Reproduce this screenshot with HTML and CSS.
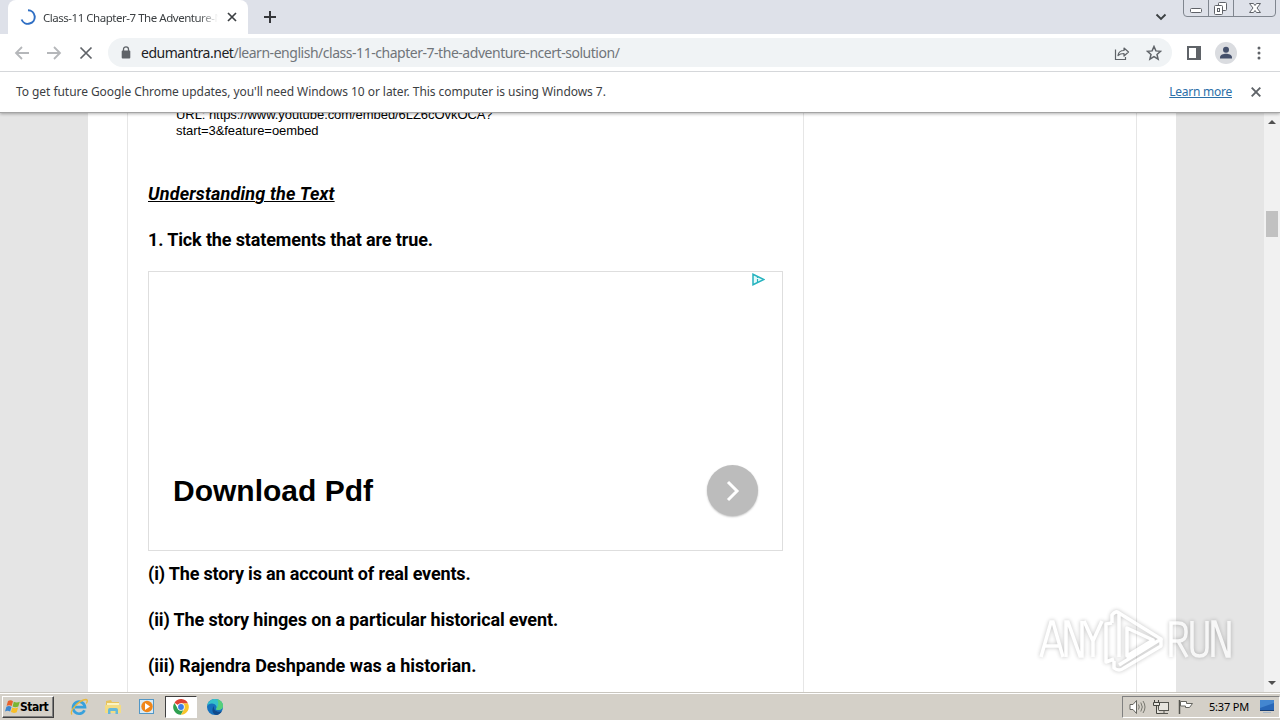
FILE: index.html
```html
<!DOCTYPE html>
<html lang="en">
<head>
    <meta charset="UTF-8">
    <meta name="viewport" content="width=device-width, initial-scale=1.0">
    <title>Class-11 Chapter-7 The Adventure</title>
    <link rel="stylesheet" href="styles.css">
</head>
<body>
    <header class="browser">
        <div class="tab-strip">
            <div class="tab">
                <svg class="spinner" width="16" height="16" viewBox="0 0 16 16"><path d="M8 1.2A6.8 6.8 0 1 1 1.6 10.5" fill="none" stroke="#2f6fc4" stroke-width="2"/></svg>
                <span class="tab-title">Class-11 Chapter-7 The Adventure-N</span>
                <svg class="tab-close" width="10" height="10" viewBox="0 0 10 10"><path d="M1 1l8 8M9 1l-8 8" stroke="#3c4043" stroke-width="1.7"/></svg>
            </div>
            <svg class="new-tab" width="12" height="12" viewBox="0 0 12 12"><path d="M6 0v12M0 6h12" stroke="#35363a" stroke-width="2"/></svg>
            <svg class="tab-search" width="12" height="8" viewBox="0 0 12 8"><path d="M1.5 1.5L6 6l4.500-4.500" fill="none" stroke="#3c4043" stroke-width="1.900"/></svg>
            <svg class="window-buttons" width="93" height="17" viewBox="0 0 93 17">
                <path d="M.5 0v13q0 3.500 3.500 3.500h85q3.500 0 3.500-3.500V0M25.500 0v16M50.500 0v16" fill="none" stroke="#80868f"/>
                <rect x="7.500" y="8.500" width="11" height="4" rx="1" fill="#fff" stroke="#5f6268"/>
                <rect x="35.500" y="2.500" width="8" height="8" rx="1" fill="#fff" stroke="#5f6268"/>
                <rect x="31.500" y="5.500" width="8" height="9" rx="1" fill="#fff" stroke="#5f6268"/>
                <rect x="34.500" y="8.500" width="2" height="3" fill="none" stroke="#5f6268"/>
                <path d="M66.500 3.500h4l1.500 2 1.500-2h4L74 8l3.500 4.500h-4l-1.500-2-1.500 2h-4L70 8z" fill="#fff" stroke="#5f6268"/>
            </svg>
        </div>
        <div class="toolbar">
            <svg class="nav" width="16" height="14" viewBox="0 0 16 14"><path d="M15 7H2M8 1L2 7l6 6" fill="none" stroke="#b5b7ba" stroke-width="1.800"/></svg>
            <svg class="nav" width="16" height="14" viewBox="0 0 16 14"><path d="M1 7h13M8 1l6 6-6 6" fill="none" stroke="#b5b7ba" stroke-width="1.800"/></svg>
            <svg class="nav" width="16" height="14" viewBox="0 0 16 14"><path d="M2.500 1.500l11 11M13.500 1.500l-11 11" stroke="#5f6368" stroke-width="1.700"/></svg>
            <div class="omnibox">
                <svg width="10" height="13" viewBox="0 0 10 13"><rect x=".7" y="4.500" width="8.600" height="8" rx="1" fill="#5f6368"/><path d="M2.500 5V3.300a2.500 2.500 0 0 1 5 0V5" fill="none" stroke="#5f6368" stroke-width="1.300"/></svg>
                <span class="url"><b>edumantra.net</b>/learn-english/class-11-chapter-7-the-adventure-ncert-solution/</span>
                <svg class="share" width="16" height="14" viewBox="0 0 16 14"><path d="M1.500 3.500v10h10v-2.500" fill="none" stroke="#5f6368" stroke-width="1.200"/><path d="M4 9.500c.5-3.500 2.500-5 6-5V2l4.500 4-4.500 4V7.500c-2.800 0-4.500.5-6 2z" fill="none" stroke="#5f6368" stroke-width="1.200" stroke-linejoin="round"/></svg>
                <svg width="16" height="16" viewBox="0 0 16 16"><path d="M8 1.500l1.900 4.400 4.700.4-3.600 3.100 1.100 4.700L8 11.600l-4.100 2.500L5 9.400 1.400 6.300l4.700-.4z" fill="none" stroke="#5f6368" stroke-width="1.500"/></svg>
            </div>
            <svg class="side-panel" width="14" height="14" viewBox="0 0 14 14"><path d="M0 0h14v14H0zM2 2v10h7V2z" fill="#5f6368" fill-rule="evenodd"/></svg>
            <svg class="profile" width="22" height="22" viewBox="0 0 22 22"><circle cx="11" cy="11" r="11" fill="#dadce0"/><circle cx="11" cy="7.700" r="3" fill="#44506b"/><path d="M5 16.500v-1.200c0-2.600 3.500-3.600 6-3.600s6 1 6 3.600v1.200z" fill="#44506b"/></svg>
            <svg class="menu" width="4" height="14" viewBox="0 0 4 14" fill="#5f6368"><circle cx="2" cy="2" r="1.500"/><circle cx="2" cy="7" r="1.500"/><circle cx="2" cy="12" r="1.500"/></svg>
        </div>
        <div class="infobar">
            <span class="infobar-text">To get future Google Chrome updates, you'll need Windows 10 or later. This computer is using Windows 7.</span>
            <a class="learn-more">Learn more</a>
            <svg width="10" height="10" viewBox="0 0 10 10"><path d="M.7.7l8.600 8.600M9.300.7L.7 9.300" stroke="#5f6368" stroke-width="1.900"/></svg>
        </div>
    </header>

    <div class="viewport">
        <main class="page">
            <article class="content">
                <p class="embed">URL: https://www.youtube.com/embed/6LZ6cOvkOCA?<br>start=3&amp;feature=oembed</p>
                <h2>Understanding the Text</h2>
                <p class="q q-title">1. Tick the statements that are true.</p>
                <div class="ad">
                    <svg class="ad-choices" width="13" height="13" viewBox="0 0 13 13"><path d="M1 1.200v10.600L12 6.500z" fill="#e4fafa" stroke="#26b3bf" stroke-width="1.500"/><path d="M5.500 4v1M5.500 6v3.500" stroke="#26b3bf" stroke-width="1.200"/></svg>
                    <div class="ad-row">
                        <span class="ad-text">Download Pdf</span>
                        <span class="ad-button"><svg width="14" height="22" viewBox="0 0 14 22"><path d="M2 2l9 9-9 9" fill="none" stroke="#fff" stroke-width="3"/></svg></span>
                    </div>
                </div>
                <p class="q q1">(i) The story is an account of real events.</p>
                <p class="q q2">(ii) The story hinges on a particular historical event.</p>
                <p class="q q3">(iii) Rajendra Deshpande was a historian.</p>
            </article>
            <aside class="sidebar"></aside>
        </main>
        <div class="scrollbar">
            <svg width="8" height="4" viewBox="0 0 8 4"><path d="M0 4l4-4 4 4z" fill="#505050"/></svg>
            <div class="thumb"></div>
            <svg width="8" height="4" viewBox="0 0 8 4"><path d="M0 0l4 4 4-4z" fill="#505050"/></svg>
        </div>
    </div>

    <footer class="taskbar">
        <div class="start">
            <svg width="16" height="15" viewBox="0 0 16 15"><path d="M3 2c2-1 3.500-.8 5 .2L6.700 7C5 6 3.500 6 1.600 6.800z" fill="#e8622c"/><path d="M8.800 2.700c2 1 3.800 1 6 0l-1.500 4.800c-2 .9-4 .9-5.700-.1z" fill="#79b534"/><path d="M1.400 7.700c2-.8 3.400-.8 5.100.2L5.100 12.600c-1.600-1-3.200-1-5.100-.2z" fill="#3d87cf"/><path d="M7.300 8.400c1.900 1 3.700 1 5.800.1l-1.400 4.800c-2 .8-4 .8-5.800-.2z" fill="#f8bf28"/></svg>
            <span>Start</span>
        </div>
        <div class="launch">
            <!-- Internet Explorer -->
            <svg width="18" height="18" viewBox="0 0 18 18"><path d="M14.500 12.200A6 6 0 1 1 15 9.200H5" fill="none" stroke="#38a1dc" stroke-width="2.700"/><path d="M2 16.500C-1 13 9 2 16 1.500c2 .2 1.300 2.500.3 4" fill="none" stroke="#e9b83a" stroke-width="1.300"/></svg>
        </div>
        <div class="launch">
            <!-- Explorer -->
            <svg width="18" height="18" viewBox="0 0 18 18"><path d="M2 3l5-1 1 2h7v10H2z" fill="#e7c35c"/><path d="M3 5h12v4H3z" fill="#fbf3c1"/><path d="M1 7h16v8H1z" fill="#f3dc83"/><path d="M4 16v-4q0-2 2-2h6q2 0 2 2v4h-2.500v-3h-5v3z" fill="#65b8d9"/></svg>
        </div>
        <div class="launch">
            <!-- Media Player -->
            <svg width="18" height="18" viewBox="0 0 18 18"><rect x="1.500" y="1.500" width="14" height="14" fill="#d9ebf6" stroke="#5297c6"/><circle cx="9" cy="8.500" r="5.700" fill="#f08619"/><path d="M7 5v7l5-3.500z" fill="#fff"/></svg>
        </div>
        <div class="launch active">
            <!-- Chrome -->
            <svg width="16" height="16" viewBox="0 0 16 16"><path d="M8 8L1.500 3.700A7.700 7.700 0 0 1 15 4.500H8z" fill="#df4334"/><path d="M8 8l3.300 1.500L8 15.700A7.700 7.700 0 0 1 1.400 3.900L4.800 9.500z" fill="#2fa050"/><path d="M8 4.500h7A7.700 7.700 0 0 1 8 15.700l3.300-6z" fill="#f8c52c"/><circle cx="8" cy="8" r="3.700" fill="#fff"/><circle cx="8" cy="8" r="2.900" fill="#3e7ee8"/></svg>
        </div>
        <div class="launch">
            <!-- Edge -->
            <svg width="18" height="18" viewBox="0 0 18 18"><circle cx="9" cy="9" r="8" fill="#1671bd"/><path d="M1.200 8C2 3 5.500 1 9 1c5 0 8 3.500 8 6.800 0 3-2.500 4.200-5 4.200-1.600 0-2.300-.7-1.700-1.500C11.500 8.500 9 5.300 5.800 5.500 3.500 5.600 2 6.700 1.200 8z" fill="#35c1cb"/><path d="M11 1.300c4 .8 6 3.800 6 6.500 0 3-2.500 4.200-5 4.200-1.600 0-2.300-.7-1.700-1.500C12.500 8 13 4 11 1.300z" fill="#57cf7b"/><path d="M8 8c-1 4 2.500 6.500 7 5.600l1-.6c-1 2-2.800 3.500-5 4C6.500 17 5 11 8 8z" fill="#114a8b"/></svg>
        </div>
        <div class="tray">
            <svg width="17" height="16" viewBox="0 0 17 16"><path d="M1 5.500h3l3.500-4v13L4 10.500H1z" fill="#fff" stroke="#65655f"/><path d="M9.500 5.500q1.500 2.500 0 5M11.800 3.500q3 4.500 0 9M14 2q4 6 0 12" fill="none" stroke="#77776f"/></svg>
            <svg width="17" height="16" viewBox="0 0 17 16"><rect x="5.500" y="3.500" width="10" height="8" fill="#e7e5df" stroke="#55554f"/><path d="M7 14.500h8M11 12v2" stroke="#55554f"/><path d="M1.500 1v3M5.500 1v3M.5 3.500h6v3h-6zM3.500 7v7.500H7" fill="#e7e5df" stroke="#44443f"/></svg>
            <svg width="17" height="16" viewBox="0 0 17 16"><path d="M2.500 1v14" stroke="#55554f" stroke-width="1.500"/><path d="M3.500 2.500h6v2h6l-3 4h-4v-1.500h-5z" fill="#fff" stroke="#65655f"/></svg>
            <span class="clock">5:37 PM</span>
            <svg width="16" height="15" viewBox="0 0 16 15"><path d="M1 1h14v10H1z" fill="#2867b8"/><path d="M1 1h14v3L1 9z" fill="#4386d0"/><path d="M1 11h14v1H1z" fill="#173e73"/><path d="M4 13.500h8" stroke="#a7b7c8"/></svg>
        </div>
    </footer>

    <svg class="watermark" width="200" height="68" viewBox="0 0 200 68">
        <g fill="none" stroke="#fff" stroke-width="3.500">
            <path d="M4 50L14 15h2l10 35M8 39h14"/>
            <path d="M29 50V15h2l12 34h2V14"/>
            <path d="M47 14l9 20 9-20M56 34v16"/>
            <path d="M134 50V16h7q8 0 8 8v2q0 8-8 8h-7M141 34l9 16"/>
            <path d="M155 14v27q0 8 7.500 8t7.500-8V14"/>
            <path d="M176 50V15h2l12 34h2V14"/>
        </g>
        <g fill="none" stroke="#fff" stroke-width="3.500" stroke-linejoin="round">
            <path d="M82 6L124 32 82 58M82 50V6q-3-3-7 2v8M90 21v28l26-16z"/>
            <path d="M75 16l-6 1v38l8-3M77 54v7q5 4 10 0l37-22v-7"/>
        </g>
    </svg>
</body>
</html>
```
FILE: styles.css
```css
* {
    box-sizing: border-box;
}
body {
    margin: 0;
    width: 1280px;
    height: 720px;
    overflow: hidden;
    display: flex;
    flex-direction: column;
    background: #fff;
    font-family: "Noto Sans", Tahoma, sans-serif;
}
svg {
    flex: none;
    display: block;
}
p, h2 {
    margin: 0;
    white-space: nowrap;
}

/* browser window */
.browser {
    flex: none;
    height: 113px;
    background: #fff;
    border-bottom: 1px solid #a4a4a4;
    box-shadow: 0 1px 3px rgba(0, 0, 0, 0.3);
    z-index: 1;
}
.tab-strip {
    height: 34px;
    display: flex;
    background: #dee1e9;
    padding-left: 8px;
}
.tab {
    width: 240px;
    height: 34px;
    display: flex;
    align-items: center;
    padding-left: 12px;
    background: #fff;
    border-radius: 8px 8px 0 0;
}
.tab-title {
    width: 175px;
    margin-left: 7px;
    overflow: hidden;
    white-space: nowrap;
    font-size: 11.5px;
    letter-spacing: -0.47px;
    color: #3c4043;
    -webkit-mask-image: linear-gradient(90deg, #000 155px, transparent);
    mask-image: linear-gradient(90deg, #000 155px, transparent);
}
.tab-close {
    margin-left: 9px;
}
.new-tab {
    margin: 11px 0 0 16px;
}
.tab-search {
    margin: 13px 16px 0 auto;
}
.window-buttons {
    margin-right: 4px;
}
.toolbar {
    height: 38px;
    display: flex;
    align-items: center;
    padding-left: 14px;
    border-bottom: 1px solid #d5d7da;
}
.nav {
    margin-right: 16px;
}
.omnibox {
    width: 1064px;
    height: 29px;
    margin-left: -2px;
    padding: 0 10px 0 13px;
    display: flex;
    align-items: center;
    border-radius: 15px;
    background: #f0f3f5;
}
.url {
    flex: 1;
    margin-left: 10px;
    font-size: 14px;
    letter-spacing: -0.47px;
    color: #70757a;
    white-space: nowrap;
}
.url b {
    font-weight: normal;
    color: #202124;
}
.share {
    margin-right: 16px;
}
.side-panel {
    margin-left: 15px;
}
.profile {
    margin-left: 14px;
}
.menu {
    margin-left: 20px;
}
.infobar {
    height: 40px;
    display: flex;
    align-items: center;
    padding: 0 19px 0 16px;
    font-size: 12px;
    color: #3c4043;
}
.infobar-text {
    padding-bottom: 2px;
    letter-spacing: -0.055px;
}
.learn-more {
    margin: 0 19px 0 auto;
    padding-bottom: 2px;
    letter-spacing: -0.25px;
    color: #2b6fa8;
    text-decoration: underline;
}

/* web page */
.viewport {
    height: 579px;
    display: flex;
    padding-left: 88px;
    background: #e5e5e5;
    overflow: hidden;
}
.page {
    width: 1088px;
    display: flex;
    padding: 0 39px;
    background: #fff;
}
.content {
    width: 677px;
    padding: 0 20px;
    border: solid #e6e6e6;
    border-width: 0 1px;
    font-family: Roboto, sans-serif;
    color: #000;
}
.sidebar {
    flex: 1;
    border-right: 1px solid #e6e6e6;
}
.embed {
    margin: -6px 0 0 28px;
    font: 13px/16px "Liberation Sans", Arial, sans-serif;
    letter-spacing: -0.06px;
}
h2 {
    margin-top: 43px;
    font-size: 18px;
    line-height: 24px;
    font-style: italic;
    font-weight: 700;
    letter-spacing: 0.17px;
    text-decoration: underline;
    text-decoration-thickness: 1px;
}
.q {
    font-size: 18px;
    line-height: 24px;
    font-weight: 700;
    margin-bottom: 22px;
}
.q-title {
    margin: 22px 0 19px;
    letter-spacing: -0.13px;
}
.q1 {
    letter-spacing: -0.16px;
}
.q2 {
    letter-spacing: -0.12px;
}
.q3 {
    letter-spacing: -0.03px;
}
.ad {
    width: 635px;
    height: 280px;
    margin-bottom: 11px;
    padding: 1px 24px 0;
    border: 1px solid #dedede;
}
.ad-choices {
    margin: 0 -7px 0 auto;
}
.ad-row {
    display: flex;
    align-items: center;
    justify-content: space-between;
    margin-top: 179px;
}
.ad-text {
    font: bold 30px/40px "Liberation Sans", Arial, sans-serif;
}
.ad-button {
    width: 51px;
    height: 51px;
    display: flex;
    align-items: center;
    justify-content: center;
    border-radius: 50%;
    background: #bcbcbc;
    box-shadow: 0 1px 2px rgba(0, 0, 0, 0.25);
}
.scrollbar {
    width: 16px;
    margin-left: auto;
    padding: 7px 0;
    display: flex;
    flex-direction: column;
    align-items: center;
    background: #f1f1f1;
}
.thumb {
    width: 12px;
    height: 26px;
    margin: 87px 0 auto;
    background: #c1c1c1;
}

/* taskbar */
.taskbar {
    height: 28px;
    display: flex;
    align-items: center;
    padding: 2px 0 2px 2px;
    background: #d4d0c8;
    border-top: 1px solid #c9c6bf;
    box-shadow: inset 0 1px #fff;
}
.start {
    width: 52px;
    height: 22px;
    display: flex;
    align-items: center;
    padding-left: 2px;
    border: 1px solid;
    border-color: #fff #404040 #404040 #fff;
    box-shadow: inset -1px -1px #808080;
    font: bold 12px "DejaVu Sans Condensed", Tahoma, sans-serif;
    letter-spacing: -0.5px;
}
.start span {
    margin-left: -1px;
}
.launch {
    width: 32px;
    height: 22px;
    margin-right: 2px;
    display: flex;
    align-items: center;
    justify-content: center;
}
.start + .launch {
    margin-left: 9px;
}
.active {
    background: #fff;
    border: 1px solid;
    border-color: #404040 #fff #fff #404040;
}
.tray {
    width: 158px;
    height: 22px;
    margin-left: auto;
    padding: 0 4px 0 6px;
    display: flex;
    align-items: center;
    gap: 7px;
    border: 1px solid;
    border-color: #808080 #fff #fff #808080;
}
.clock {
    flex: 1;
    margin-left: 8px;
    font-size: 11px;
    white-space: nowrap;
    letter-spacing: -0.2px;
}

/* overlay on top of the desktop */
.watermark {
    position: absolute;
    left: 1037px;
    top: 607px;
    z-index: 2;
    opacity: 0.7;
    filter: drop-shadow(0 0 2px rgba(0, 0, 0, 0.35));
}
```
